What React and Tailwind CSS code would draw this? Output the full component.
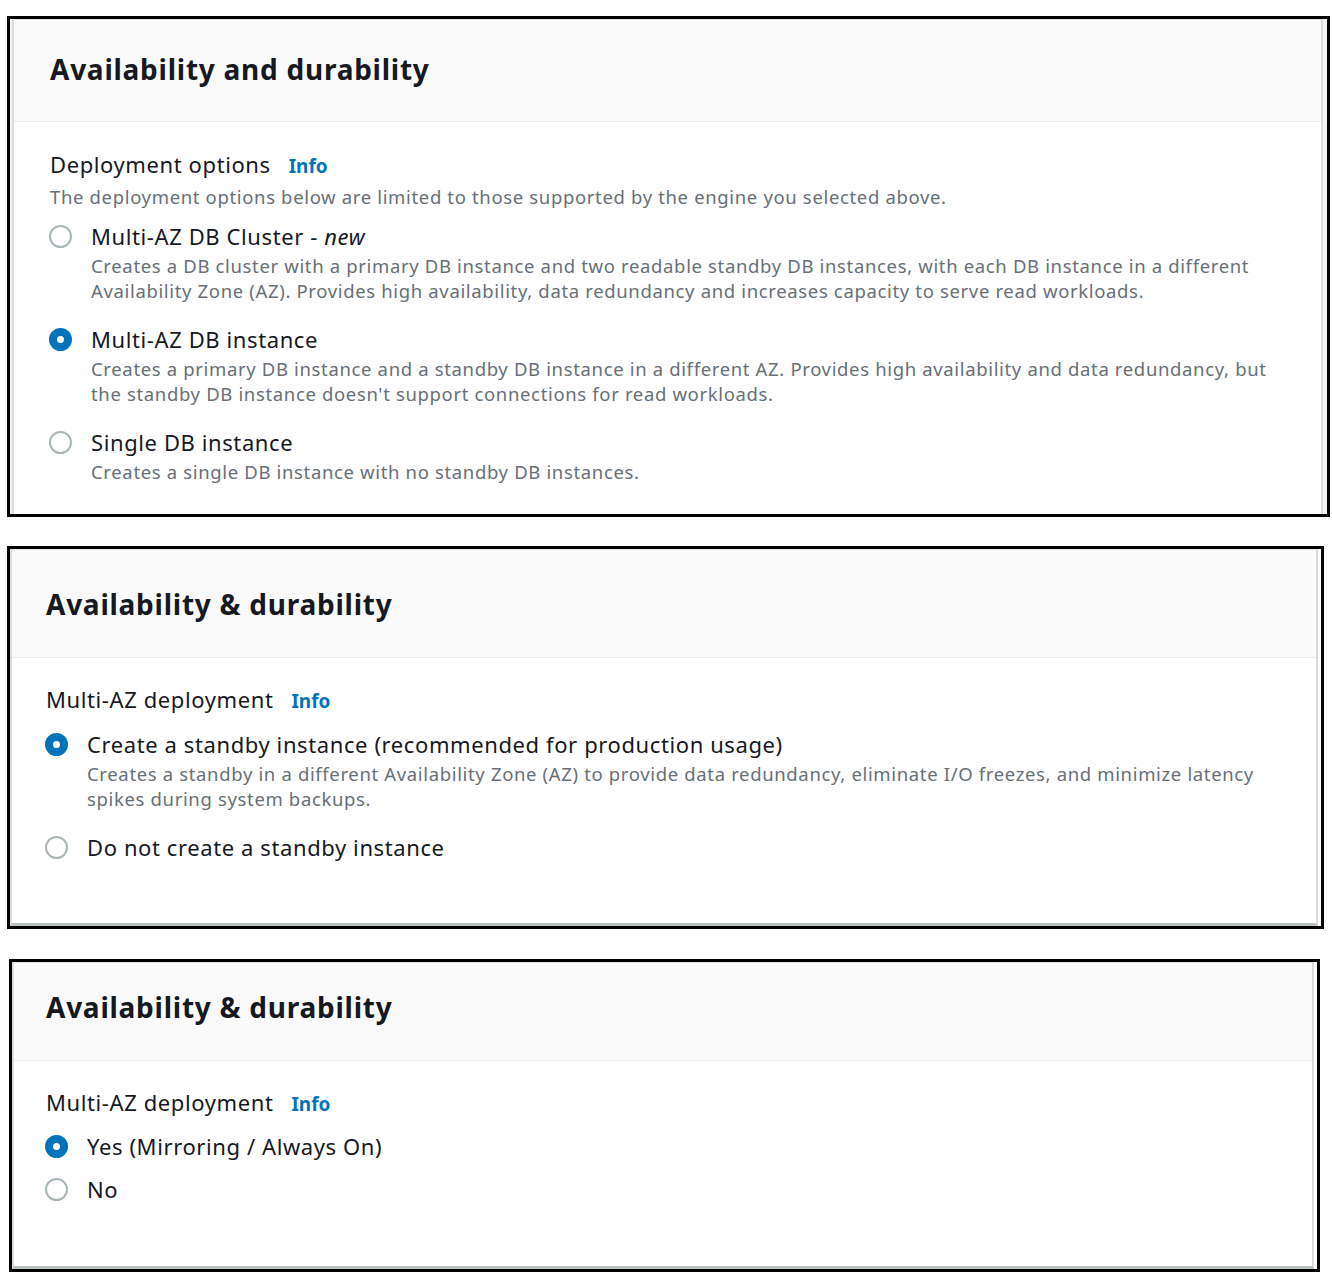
import React from "react";

const FONT = { fontFamily: '"Noto Sans", "Open Sans", Arial, sans-serif' };

function Radio({ checked }) {
  return checked ? (
    <div className="w-[23px] h-[23px] rounded-full border-[8px] border-[#0073bb] bg-white shrink-0" />
  ) : (
    <div className="w-[23px] h-[23px] rounded-full border-2 border-[#aab7b8] bg-white shrink-0" />
  );
}

function Option({ checked, label, desc, className = "" }) {
  return (
    <div className={"flex " + className}>
      <div className="w-[42px] shrink-0 flex items-start pt-[4px] -ml-[1px]">
        <Radio checked={checked} />
      </div>
      <div>
        <div className="text-[22px] leading-[30px] tracking-[0.6px] text-[#16191f] whitespace-nowrap">{label}</div>
        {desc && (
          <div className="mt-[2px] text-[18.5px] leading-[25px] tracking-[0.65px] text-[#687078]">
            {desc.map((l, i) => (
              <div key={i} className="whitespace-nowrap">{l}</div>
            ))}
          </div>
        )}
      </div>
    </div>
  );
}

function FieldLabel({ children }) {
  return (
    <div className="flex items-baseline leading-[30px]">
      <span className="text-[22px] tracking-[0.6px] text-[#16191f]">{children}</span>
      <span className="ml-[18px] text-[19px] font-bold text-[#0073bb]">Info</span>
    </div>
  );
}

function Title({ children }) {
  return (
    <div className="text-[28px] leading-[36px] font-bold tracking-[0.75px] text-[#16191f] whitespace-nowrap">
      {children}
    </div>
  );
}

export default function App() {
  return (
    <div className="bg-white w-[1332px] h-[1288px] pt-[16px]" style={FONT}>
      {/* Panel 1 */}
      <div className="ml-[7px] w-[1323px] h-[501px] border-[3px] border-black overflow-hidden bg-[#f3f3f3]">
        <div className="ml-[2px] mr-[4px] h-[600px] bg-white border-t border-[#e3e6e6] border-x-2 border-x-[#d8dcdc]">
          <div className="h-[102px] bg-[#fafafa] border-b border-[#eaeded] pt-[31px] pl-[36px]">
            <Title>Availability and durability</Title>
          </div>
          <div className="pt-[27px] pl-[36px]">
            <FieldLabel>Deployment options</FieldLabel>
            <div className="mt-[3px] text-[18.5px] leading-[25px] tracking-[0.65px] text-[#687078] whitespace-nowrap">
              The deployment options below are limited to those supported by the engine you selected above.
            </div>
            <Option
              className="mt-[12px]"
              label={<>Multi-AZ DB Cluster - <i>new</i></>}
              desc={[
                "Creates a DB cluster with a primary DB instance and two readable standby DB instances, with each DB instance in a different",
                "Availability Zone (AZ). Provides high availability, data redundancy and increases capacity to serve read workloads.",
              ]}
            />
            <Option
              className="mt-[21px]"
              checked
              label="Multi-AZ DB instance"
              desc={[
                "Creates a primary DB instance and a standby DB instance in a different AZ. Provides high availability and data redundancy, but",
                "the standby DB instance doesn't support connections for read workloads.",
              ]}
            />
            <Option
              className="mt-[21px]"
              label="Single DB instance"
              desc={["Creates a single DB instance with no standby DB instances."]}
            />
          </div>
        </div>
      </div>

      {/* Panel 2 */}
      <div className="mt-[29px] ml-[7px] w-[1317px] h-[383px] border-[3px] border-black overflow-hidden bg-white">
        <div className="mr-[3px] h-[377px] bg-white border-t border-[#e3e6e6] border-x-2 border-x-[#d8dcdc] border-b-[3px] border-b-[#b9c0c0]">
          <div className="h-[108px] bg-[#fafafa] border-b border-[#eaeded] pt-[36px] pl-[34px]">
            <Title>Availability &amp; durability</Title>
          </div>
          <div className="pt-[26px] pl-[34px]">
            <FieldLabel>Multi-AZ deployment</FieldLabel>
            <Option
              className="mt-[13px]"
              checked
              label="Create a standby instance (recommended for production usage)"
              desc={[
                "Creates a standby in a different Availability Zone (AZ) to provide data redundancy, eliminate I/O freezes, and minimize latency",
                "spikes during system backups.",
              ]}
            />
            <Option className="mt-[21px]" label="Do not create a standby instance" />
          </div>
        </div>
      </div>

      {/* Panel 3 */}
      <div className="mt-[30px] ml-[9px] w-[1311px] h-[313px] border-[3px] border-black overflow-hidden bg-white">
        <div className="mr-[3px] h-[307px] bg-white border-t border-[#e3e6e6] border-x-2 border-x-[#d8dcdc] border-b-[3px] border-b-[#b9c0c0]">
          <div className="h-[98px] bg-[#fafafa] border-b border-[#eaeded] pt-[26px] pl-[32px]">
            <Title>Availability &amp; durability</Title>
          </div>
          <div className="pt-[26px] pl-[32px]">
            <FieldLabel>Multi-AZ deployment</FieldLabel>
            <Option className="mt-[12px]" checked label="Yes (Mirroring / Always On)" />
            <Option className="mt-[13px]" label="No" />
          </div>
        </div>
      </div>
    </div>
  );
}
